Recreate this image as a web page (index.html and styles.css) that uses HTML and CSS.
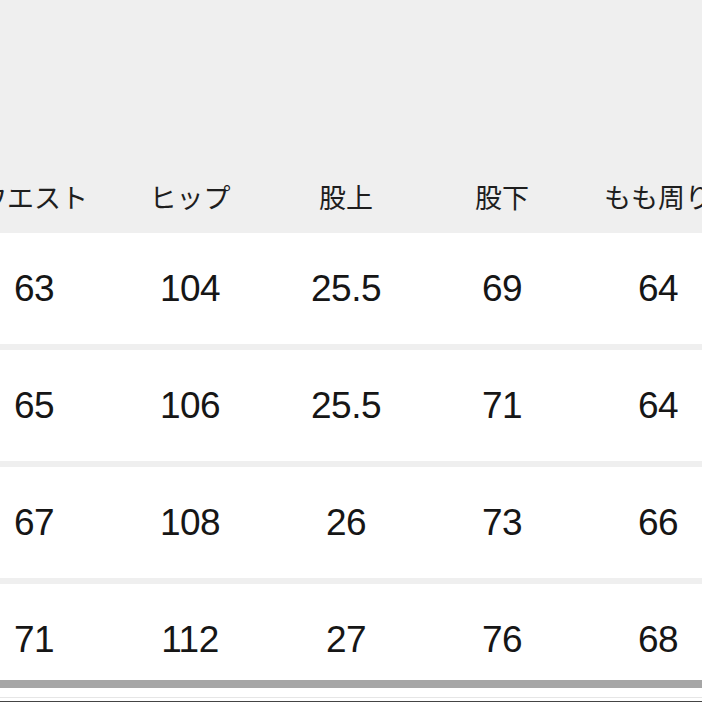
FILE: index.html
```html
<!DOCTYPE html>
<html lang="ja">
<head>
<meta charset="utf-8">
<link rel="stylesheet" href="styles.css">
</head>
<body>
<div class="sheet">
  <div class="head">
    <div class="cell">ウエスト</div>
    <div class="cell">ヒップ</div>
    <div class="cell">股上</div>
    <div class="cell">股下</div>
    <div class="cell">もも周り</div>
  </div>
  <div class="rows">
    <div class="row">
      <div class="cell">63</div><div class="cell">104</div><div class="cell">25.5</div><div class="cell">69</div><div class="cell">64</div>
    </div>
    <div class="row">
      <div class="cell">65</div><div class="cell">106</div><div class="cell">25.5</div><div class="cell">71</div><div class="cell">64</div>
    </div>
    <div class="row">
      <div class="cell">67</div><div class="cell">108</div><div class="cell">26</div><div class="cell">73</div><div class="cell">66</div>
    </div>
    <div class="row">
      <div class="cell">71</div><div class="cell">112</div><div class="cell">27</div><div class="cell">76</div><div class="cell">68</div>
    </div>
  </div>
</div>
<div class="edge">
  <div class="edge-bar"></div>
  <div class="edge-line"></div>
  <div class="edge-dark"></div>
</div>
</body>
</html>
```

FILE: styles.css
```css
html, body {
  margin: 0;
  padding: 0;
  width: 702px;
  height: 702px;
  overflow: hidden;
  background: #efefef;
}

.sheet {
  margin-left: -44px;
  width: 780px;
}

.head {
  display: grid;
  grid-template-columns: repeat(5, 156px);
  height: 233px;
  box-sizing: border-box;
  padding-top: 177px;
  font-family: "Noto Sans CJK JP", sans-serif;
  font-size: 27px;
  font-weight: 400;
  line-height: 40px;
  color: #1e1e1e;
}

.head .cell {
  text-align: center;
  white-space: nowrap;
}

.rows {
  display: flex;
  flex-direction: column;
  gap: 6px;
}

.row {
  display: grid;
  grid-template-columns: repeat(5, 156px);
  height: 111px;
  align-items: center;
  background: #fff;
  font-family: "Liberation Sans", Arial, sans-serif;
  font-size: 37px;
  letter-spacing: -0.5px;
  color: #161616;
}

.row .cell {
  text-align: center;
}

.edge {
  position: fixed;
  left: 0;
  right: 0;
  bottom: 0;
  height: 22px;
  display: flex;
  flex-direction: column;
  background: #fff;
}

.edge-bar {
  height: 8px;
  background: #a6a6a6;
}

.edge-line {
  height: 1px;
  margin-top: 9px;
  background: #e6e6e6;
}

.edge-dark {
  margin-top: auto;
  height: 1px;
  background: #444;
}
```
